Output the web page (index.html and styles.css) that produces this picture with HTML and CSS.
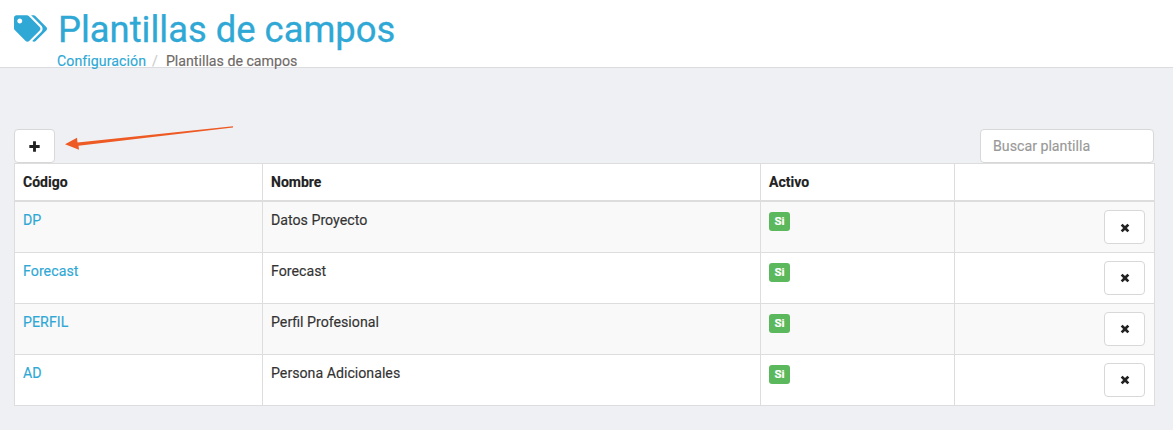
FILE: index.html
```html
<!DOCTYPE html>
<html lang="es">
<head>
<meta charset="utf-8">
<title>Plantillas de campos</title>
<link rel="stylesheet" href="styles.css">
</head>
<body>
<header class="page-header">
  <svg class="title-icon" viewBox="0 0 640 512" aria-hidden="true"><path d="M497.941 225.941L286.059 14.059A48 48 0 0 0 252.118 0H48C21.49 0 0 21.49 0 48v204.118a48 48 0 0 0 14.059 33.941l211.882 211.882c18.744 18.745 49.136 18.746 67.882 0l204.118-204.118c18.745-18.745 18.745-49.137 0-67.882zM112 160c-26.51 0-48-21.49-48-48s21.49-48 48-48 48 21.49 48 48-21.49 48-48 48zm513.941 133.823L421.823 497.941c-18.745 18.745-49.137 18.745-67.882 0l-.36-.36L527.64 323.522c16.999-16.999 26.36-39.6 26.36-63.64s-9.362-46.641-26.36-63.64L331.397 0h48.721a48 48 0 0 1 33.941 14.059l211.882 211.882c18.745 18.745 18.745 49.137 0 67.882z"/></svg>
  <div class="title-block">
    <h1 class="title">Plantillas de campos</h1>
    <nav class="crumbs"><a class="link" href="#">Configuración</a><span class="sep">/</span><span class="current">Plantillas de campos</span></nav>
  </div>
</header>
<main class="content">
  <div class="toolbar">
    <button class="btn btn-add" type="button"><svg class="glyph" viewBox="0 0 10 10" aria-hidden="true"><path d="M3.700 0.300h2.600v3.400h3.400v2.600H6.300v3.400H3.700V6.300H0.300V3.700h3.400z"/></svg></button>
    <input class="search" type="text" placeholder="Buscar plantilla">
  </div>
  <table class="grid">
    <colgroup><col class="c1"><col class="c2"><col class="c3"><col class="c4"></colgroup>
    <thead><tr><th>Código</th><th>Nombre</th><th>Activo</th><th></th></tr></thead>
    <tbody>
      <tr><td><a class="link" href="#">DP</a></td><td>Datos Proyecto</td><td><span class="badge">Si</span></td><td class="act"><button class="btn btn-del" type="button"><svg class="glyph-x" viewBox="0 0 10 10" aria-hidden="true"><path d="M0.700 2.600L2.600 0.700 5 3.100 7.400 0.700 9.300 2.600 6.900 5 9.300 7.400 7.400 9.300 5 6.900 2.600 9.300 0.700 7.400 3.100 5z"/></svg></button></td></tr>
      <tr><td><a class="link" href="#">Forecast</a></td><td>Forecast</td><td><span class="badge">Si</span></td><td class="act"><button class="btn btn-del" type="button"><svg class="glyph-x" viewBox="0 0 10 10" aria-hidden="true"><path d="M0.700 2.600L2.600 0.700 5 3.100 7.400 0.700 9.300 2.600 6.900 5 9.300 7.400 7.400 9.300 5 6.900 2.600 9.300 0.700 7.400 3.100 5z"/></svg></button></td></tr>
      <tr><td><a class="link" href="#">PERFIL</a></td><td>Perfil Profesional</td><td><span class="badge">Si</span></td><td class="act"><button class="btn btn-del" type="button"><svg class="glyph-x" viewBox="0 0 10 10" aria-hidden="true"><path d="M0.700 2.600L2.600 0.700 5 3.100 7.400 0.700 9.300 2.600 6.900 5 9.300 7.400 7.400 9.300 5 6.900 2.600 9.300 0.700 7.400 3.100 5z"/></svg></button></td></tr>
      <tr><td><a class="link" href="#">AD</a></td><td>Persona Adicionales</td><td><span class="badge">Si</span></td><td class="act"><button class="btn btn-del" type="button"><svg class="glyph-x" viewBox="0 0 10 10" aria-hidden="true"><path d="M0.700 2.600L2.600 0.700 5 3.100 7.400 0.700 9.300 2.600 6.900 5 9.300 7.400 7.400 9.300 5 6.900 2.600 9.300 0.700 7.400 3.100 5z"/></svg></button></td></tr>
    </tbody>
  </table>
</main>
<svg class="arrow" width="240" height="40" viewBox="0 0 240 40" aria-hidden="true"><path d="M233 2.200 L233 3.600 L78.500 21.800 L79 25.700 L65 20.300 L77 13.700 L77.500 18.500 Z"/></svg>
</body>
</html>
```
FILE: styles.css
```css
* { box-sizing: border-box; }
html, body { margin: 0; padding: 0; }
body {
  position: relative;
  height: 430px;
  overflow: hidden;
  background: #eff0f4;
  font-family: Roboto, "Liberation Sans", sans-serif;
  font-size: 14px;
  color: #333;
  -webkit-text-stroke: 0.15px currentColor;
}
.page-header {
  display: flex;
  align-items: flex-start;
  height: 68px;
  padding: 15px 0 0 14px;
  background: #fff;
  border-bottom: 1px solid #dcdce0;
}
.title-icon { width: 33px; height: 27px; fill: #2fa8d5; margin-right: 11px; flex: none; }
.title-block { margin-top: -5px; }
.title {
  margin: 0;
  font-size: 36.400px;
  line-height: 40px;
  font-weight: 400;
  color: #2fa8d5;
  -webkit-text-stroke: 0.3px currentColor;
}
.crumbs { font-size: 14.200px; line-height: 17px; margin: 3px 0 0 -1px; white-space: nowrap; }
.link { color: #2fa8d5; text-decoration: none; letter-spacing: 0.05px; }
.sep { color: #ccc; margin: 0 8px 0 6px; }
.current { color: #6f6a68; }
.content { padding: 61px 19px 0 14px; }
.toolbar { display: flex; justify-content: space-between; align-items: flex-end; height: 34px; }
.btn {
  display: flex;
  align-items: center;
  justify-content: center;
  width: 41px;
  height: 34px;
  padding: 0;
  background: #fff;
  border: 1px solid #d8d8d8;
  border-radius: 4px;
}
.glyph { width: 11px; height: 11px; fill: #222; }
.glyph-x { width: 10px; height: 10px; fill: #222; margin-top: 1px; }
.search {
  width: 174px;
  height: 34px;
  padding: 0 12px;
  font: inherit;
  font-size: 14.200px;
  color: #555;
  background: #fff;
  border: 1px solid #d8d8d8;
  border-radius: 4px;
  outline: none;
}
.search::placeholder { color: #999; opacity: 1; }
.grid {
  width: 1140px;
  table-layout: fixed;
  border-collapse: collapse;
  background: #fff;
  font-size: 14.200px;
}
.c1 { width: 248px; }
.c2 { width: 498px; }
.c3 { width: 194px; }
.c4 { width: 200px; }
.grid th, .grid td { border: 1px solid #dddddd; padding: 8px; text-align: left; vertical-align: top; line-height: 20px; }
.grid th { height: 37px; font-size: 14px; font-weight: 700; color: #222; border-bottom-width: 2px; }
.grid td { height: 51px; }
.grid tbody tr:nth-child(odd) td { background: #f9f9f9; }
.grid td.act { padding: 8px 9px 0 8px; }
.btn-del { margin-left: auto; }
.badge {
  display: inline-block;
  vertical-align: top;
  width: 21px;
  height: 19px;
  margin-top: 2px;
  background: #5cb85c;
  border-radius: 3px;
  color: #fff;
  font-size: 11.500px;
  font-weight: 700;
  line-height: 19px;
  text-align: center;
}
.arrow { position: absolute; left: 0; top: 124px; fill: #ee5a24; }
```
